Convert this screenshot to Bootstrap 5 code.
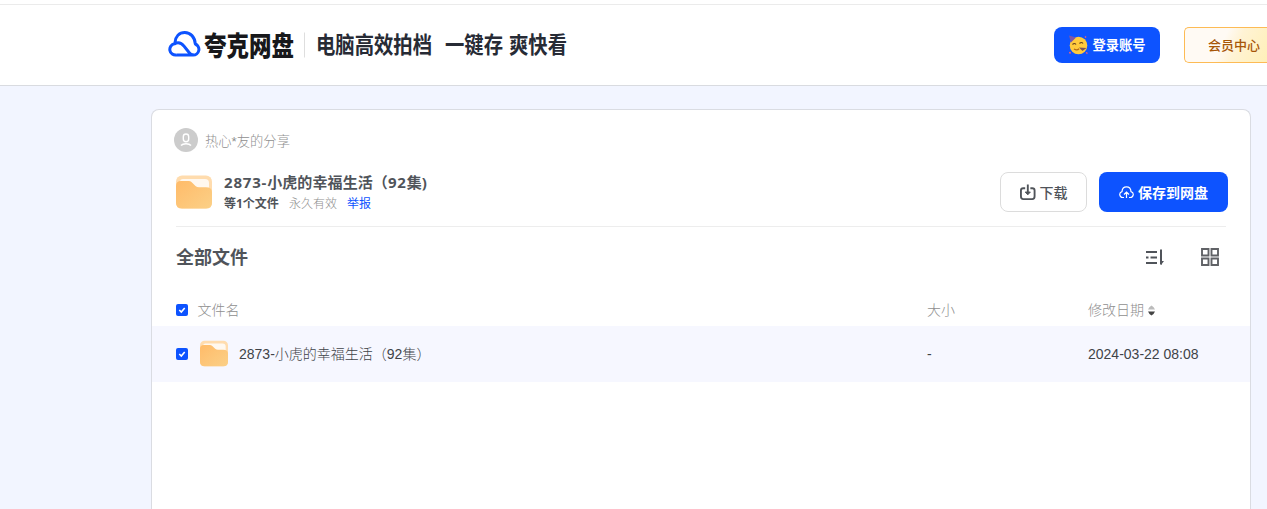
<!DOCTYPE html>
<html lang="zh-CN">
<head>
<meta charset="utf-8">
<meta name="viewport" content="width=device-width, initial-scale=1">
<title>夸克网盘</title>
<link href="https://cdn.jsdelivr.net/npm/bootstrap@5.3.0/dist/css/bootstrap.min.css" rel="stylesheet">
<style>
html,body{height:100%;overflow:hidden}
body{display:flex;flex-direction:column;background:#f2f5ff;font-family:"Open Sans","Noto Sans CJK SC",sans-serif;color:#50545a;font-size:14px;line-height:20px}
.strip{height:5px;flex:none;background:#fff;border-bottom:1px solid #ebebeb}
.topbar{height:81px;flex:none;border-bottom:1px solid #d9dbe0;background:#fff;padding:0 0 0 168px}
.wordmark{font-family:"Noto Sans CJK SC",sans-serif}
.btn-blue,.btn-blue:hover{background:#0d53ff;color:#fff;border:0}
.login{width:106px;height:36px;border-radius:8px;font-weight:700;font-size:13.3px;margin-right:24px;line-height:20px}
.vip{width:83px;height:36px;border:1px solid #fdbb55;border-right:0;border-radius:5px 0 0 5px;color:#a75608;font-size:13px;font-weight:500;line-height:20px;text-align:left;background:linear-gradient(115deg,#fffaf4 0 45%,#fff3d4 62%,#fff0b8)}
.panel{width:1100px;flex:1;margin:23px 0 0 151px;border:1px solid #dadce2;border-bottom:0;border-radius:8px 8px 0 0;background:#fff}
.sharer{height:24px;margin:18px 0 0 22px;color:#8f8f8f;font-size:13.3px;gap:7px;font-weight:300}
.share-head{height:40px;margin:20px 22px 0 24px}
.share-title{font-size:15px;font-weight:700;line-height:21px;letter-spacing:.1px}
.share-title span{letter-spacing:.8px}
.meta{font-size:12px;line-height:20px;gap:10px;padding-top:1px;margin-bottom:-1px}
.meta span{color:#8f8f8f;font-weight:300}
.meta a{color:#0d53ff}
.dl,.dl:hover{width:87px;height:40px;border:1px solid #dcdcdc;border-radius:8px;font-size:14px;font-weight:500;color:#50545a;margin-right:12px;background:#fff}
.save{width:129px;height:40px;border-radius:8px;font-size:14px;font-weight:700}
.split{height:1px;background:#ededed;margin:14px 24px 0}
.tools{height:60px;padding:0 31px 0 24px}
.tools h1{font-size:18px;font-weight:700;margin:0;line-height:26px}
.view-icons{gap:37px}
.file-grid{display:grid;grid-template-columns:751px 161px 1fr;align-items:center;padding-left:24px;font-weight:300}
.file-head{height:39px;color:#8f8f8f;padding-top:7px}
.file-row{height:56px;background:#f6f7ff;color:#3f4348}
.list-font{font-family:"Liberation Sans","Noto Sans CJK SC",sans-serif}
.row-check{margin-right:9.500px}
svg{flex:none;display:block}
</style>
</head>
<body>
<svg width="0" height="0" class="position-absolute">
<defs>
<linearGradient id="fold" x2="1" y2="1"><stop stop-color="#ffbb69"/><stop offset="1" stop-color="#fbd087"/></linearGradient>
<symbol id="folder" viewBox="0 0 36 34"><rect width="36" height="33" y=".5" rx="6" fill="#ffdcae"/><path d="M4 7q0-3 3-3h22q4 0 4 4v9H4z" fill="#fff8ef"/><path d="M0 11q0-5 5-5h8q2 0 3.500 2l3 3q1.500 1.200 3.500 1.200h7q6 0 6 5V28q0 5.500-6 5.500H6q-6 0-6-5.500z" fill="url(#fold)"/></symbol>
<symbol id="tick" viewBox="0 0 12 12"><rect width="12" height="12" rx="2" fill="#0d53ff"/><path d="M3.300 6l2 2 3.400-4" fill="none" stroke="#fff" stroke-width="1.600"/></symbol>
</defs>
</svg>
<div class="strip"></div>
<header class="topbar d-flex align-items-center">
  <svg class="wordmark" width="420" height="40" viewBox="0 0 420 40">
    <path d="M8.500 30H25a5.700 5.700 0 0 0 2.300-11C26.800 12 22.500 7.500 16.800 7.500S7.500 11.500 7 17.500M8.500 30A5.600 5.600 0 0 1 6.500 18.800C10 17 13.500 18 16 21.200L20.500 26.800Q22.800 29.800 26 30" fill="none" stroke="#0d53ff" stroke-width="3" stroke-linejoin="round"/>
    <text x="36" y="30.500" font-size="27" font-weight="900" fill="#17181b" textLength="90" lengthAdjust="spacingAndGlyphs">夸克网盘</text>
    <path d="M136.500 7.500v25" stroke="#dedede"/>
    <g font-size="22.500" font-weight="700" fill="#272b35">
      <text x="148" y="28.200" textLength="116" lengthAdjust="spacingAndGlyphs">电脑高效拍档</text>
      <text x="277" y="28.200" textLength="58" lengthAdjust="spacingAndGlyphs">一键存</text>
      <text x="341" y="28.200" textLength="58" lengthAdjust="spacingAndGlyphs">爽快看</text>
    </g>
  </svg>
  <div class="d-flex ms-auto">
    <button class="btn btn-blue login d-flex align-items-center justify-content-center p-0" type="button">
      <svg width="20" height="20" viewBox="0 0 20 20" class="me-1"><circle cx="10.500" cy="10.500" r="8.800" fill="#ffcb3d"/><path d="M1 .5l7 2-5 5z" fill="#7d55a8"/><path d="M4.500 9.500q2-2 3.500 0M11.500 8.500q2-2 3.500 0" fill="none" stroke="#68401e" stroke-width="1.200"/><path d="M6 14q3 2 5-.3" stroke="#b36b16" stroke-width="1.300" fill="none"/><path d="M11 12.500l7.500.500-4 3z" fill="#79545c"/><path d="M17 2.500l1-1M1.500 17l1 1.500M18 17.500l1.500 1" stroke="#f16078" stroke-width="1.500"/></svg>
      <span>登录账号</span>
    </button>
    <button class="btn vip p-0 ps-4" type="button"><span class="d-block" style="margin-left:-1px">会员中心</span></button>
  </div>
</header>
<main class="panel d-flow-root overflow-hidden">
  <div class="sharer d-flex align-items-center list-font">
    <svg width="24" height="24" viewBox="0 0 24 24"><circle cx="12" cy="12" r="12" fill="#ccc"/><rect x="9.300" y="6" width="5.400" height="7.800" rx="2.700" fill="none" stroke="#fff" stroke-width="1.400"/><path d="M7 17.500q1.500-1.800 5-1.800t5 1.800" fill="none" stroke="#fff" stroke-width="1.500"/></svg>
    <span class="pt-1 lh-1">热心*友的分享</span>
  </div>
  <div class="share-head d-flex align-items-center">
    <svg width="36" height="34"><use href="#folder"/></svg>
    <div class="ms-2 ps-1">
      <div class="share-title"><span>2873-</span>小虎的幸福生活（<span>92</span>集)</div>
      <div class="meta d-flex"><b>等1个文件</b><span>永久有效</span><a href="#" class="text-decoration-none">举报</a></div>
    </div>
    <button class="btn dl ms-auto d-flex align-items-center justify-content-center p-0" type="button">
      <svg class="me-1" width="16" height="17" viewBox="0 0 17 17" fill="none" stroke="#50545a" stroke-width="2"><path d="M5.500 4H3.500Q1 4 1 6.500v6Q1 15.500 3.500 15.500h9.500q2.500 0 2.500-3v-6Q15.500 4 13 4h-2M8.300 0v9"/><path d="M5.500 8l2.800 3L11 8z" fill="#50545a" stroke-width="1"/></svg>
      <span>下载</span>
    </button>
    <button class="btn btn-blue save d-flex align-items-center justify-content-center p-0 gap-1" type="button">
      <svg width="15" height="13" viewBox="0 0 15 13" fill="none" stroke="#fff" stroke-width="1.200"><path d="M5 11.500H3.800A3 3 0 0 1 3 5.600C3.200 2.700 5 .9 7.500.9s4.300 1.800 4.500 4.700a3 3 0 0 1-.8 5.900H10M7.500 12V6.500M5 8.500L7.500 6 10 8.500"/></svg>
      <span>保存到网盘</span>
    </button>
  </div>
  <div class="split"></div>
  <div class="tools d-flex align-items-center">
    <h1>全部文件</h1>
    <div class="view-icons d-flex align-items-center ms-auto">
      <svg width="19" height="17" viewBox="0 0 19 17" fill="none" stroke="#50545a" stroke-width="2"><path d="M1 3h11M1 8.500h2.500M5.500 8.500H12M1 14h11M16 .5v15"/><path d="M16 16v-4h3z" fill="#50545a" stroke="none"/></svg>
      <svg width="18" height="18" viewBox="0 0 18 18" fill="none" stroke="#606266" stroke-width="1.900"><path d="M1 1h6.500v6.500H1zM10.500 1H17v6.500h-6.500zM1 10.500h6.500V17H1zM10.500 10.500H17V17h-6.500z"/></svg>
    </div>
  </div>
  <div class="file-grid file-head list-font">
    <div class="d-flex align-items-center"><svg class="row-check" width="12" height="12"><use href="#tick"/></svg>文件名</div>
    <div>大小</div>
    <div class="d-flex align-items-center gap-1">修改日期<svg width="7" height="11" viewBox="0 0 7 11"><path d="M0 4.500Q1 2 3.500.5 6 2 7 4.500z" fill="#bbb"/><path d="M0 6.500h7Q6 9 3.500 10.500 1 9 0 6.500z" fill="#444"/></svg></div>
  </div>
  <div class="file-grid file-row list-font">
    <div class="d-flex align-items-center"><svg width="12" height="12"><use href="#tick"/></svg><svg class="mx-2" width="35" height="28" viewBox="0 0 35 28"><use href="#folder" x="4" width="28" height="27"/></svg>2873-小虎的幸福生活（92集）</div>
    <div>-</div>
    <div>2024-03-22 08:08</div>
  </div>
</main>
</body>
</html>
